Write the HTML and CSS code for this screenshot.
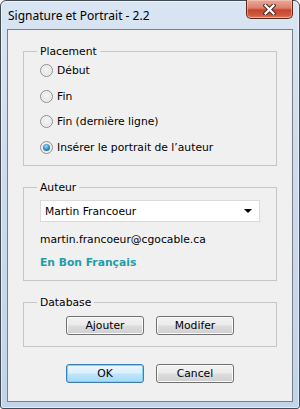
FILE: index.html
```html
<!DOCTYPE html>
<html lang="fr">
<head>
<meta charset="utf-8">
<title>Signature et Portrait - 2.2</title>
<link rel="stylesheet" href="styles.css">
</head>
<body>
<div class="window">
  <div class="titlebar">
    <span class="title">Signature et Portrait - 2.2</span>
    <button class="close" aria-label="Fermer">
      <svg width="13" height="11" viewBox="0 0 13 11">
        <path d="M2.5 1.5 L10.5 9.5 M10.5 1.5 L2.5 9.5" stroke="#4a2a24" stroke-width="4.2" stroke-linecap="square"/>
        <path d="M2.5 1.5 L10.5 9.5 M10.5 1.5 L2.5 9.5" stroke="#ffffff" stroke-width="2.2" stroke-linecap="square"/>
      </svg>
    </button>
  </div>
  <div class="client">
    <fieldset class="group group-placement">
      <legend>Placement</legend>
      <label class="radio"><span class="dot"></span>Début</label>
      <label class="radio"><span class="dot"></span>Fin</label>
      <label class="radio"><span class="dot"></span>Fin (dernière ligne)</label>
      <label class="radio"><span class="dot checked"></span>Insérer le portrait de l’auteur</label>
    </fieldset>
    <fieldset class="group group-auteur">
      <legend>Auteur</legend>
      <div class="combo"><span>Martin Francoeur</span><span class="arrow"></span></div>
      <div class="email">martin.francoeur@cgocable.ca</div>
      <div class="link">En Bon Français</div>
    </fieldset>
    <fieldset class="group group-db">
      <legend>Database</legend>
      <div class="btnrow"><button class="btn">Ajouter</button><button class="btn">Modifer</button></div>
    </fieldset>
    <div class="btnrow dialog-buttons"><button class="btn default">OK</button><button class="btn">Cancel</button></div>
  </div>
</div>
</body>
</html>
```

FILE: styles.css
```css
* { box-sizing: border-box; }
html, body { margin: 0; padding: 0; background: #ffffff; }
body { width: 300px; height: 409px; overflow: hidden; }

.window {
  width: 300px;
  height: 409px;
  border: 1px solid #434a52;
  border-radius: 6px 6px 3px 3px;
  background: linear-gradient(180deg, #d9e5f2 0%, #cddcee 40%, #c0d4ea 100%);
  box-shadow: inset 0 0 0 1px rgba(255,255,255,0.55);
  display: flex;
  flex-direction: column;
}

.titlebar {
  height: 28px;
  display: flex;
  justify-content: space-between;
  align-items: flex-start;
  padding: 0 6px 0 7px;
}
.title {
  font-family: "Noto Sans", sans-serif;
  font-size: 12px;
  line-height: 16px;
  margin-top: 7px;
  color: #000;
}
.close {
  width: 47px;
  height: 19px;
  margin-top: -1px;
  padding: 0;
  border: 1px solid #5b2b22;
  border-top: none;
  border-radius: 0 0 5px 5px;
  background: linear-gradient(180deg, #e9a99a 0%, #dc7f6a 45%, #c8432c 55%, #cf5a3f 85%, #e0866b 100%);
  box-shadow: inset 0 0 0 1px rgba(255,220,210,0.45);
  display: flex;
  align-items: center;
  justify-content: center;
}
.close svg { display: block; }

.client {
  flex: 1;
  margin: 0 6px 6px 6px;
  border: 1px solid #76808b;
  background: #f0f0f0;
  padding: 15px 15px 0 15px;
  font-family: "DejaVu Sans", sans-serif;
  font-size: 10.75px;
  color: #000;
}

.group {
  margin: 0 0 15px 0;
  border: 1px solid #c6c6c6;
  padding: 6px 16px 11px 16px;
  min-width: 0;
}
.group legend {
  padding: 0 3px;
  margin-left: -3px;
  line-height: 13px;
  height: 13px;
}

.group-placement { display: flex; flex-direction: column; gap: 12.7px; }
.radio {
  display: flex;
  align-items: center;
  height: 13px;
  line-height: 13px;
  gap: 4px;
}
.dot {
  width: 13px;
  height: 13px;
  border-radius: 50%;
  border: 1px solid #8d8f91;
  background: radial-gradient(circle at 50% 45%, #f7f7f7 0%, #e6e6e6 55%, #d3d3d3 100%);
  box-shadow: inset 0 0 0 1px #f4f4f4;
  flex: none;
  display: flex;
  align-items: center;
  justify-content: center;
}
.dot.checked::after {
  content: "";
  width: 7px;
  height: 7px;
  border-radius: 50%;
  background: radial-gradient(circle at 45% 35%, #a8dcf6 0%, #3f93cf 45%, #184f86 100%);
}

.group-auteur { padding-top: 6px; }
.combo {
  height: 22px;
  border: 1px solid #dadada;
  background: #ffffff;
  display: flex;
  align-items: center;
  justify-content: space-between;
  padding: 0 4px 0 4px;
}
.arrow {
  width: 0;
  height: 0;
  margin-right: 3px;
  border-left: 4px solid transparent;
  border-right: 4px solid transparent;
  border-top: 4px solid #000;
}
.email { margin-top: 11px; line-height: 13px; }
.link {
  margin-top: 10px;
  line-height: 13px;
  font-weight: bold;
  color: #1e9ea8;
}

.group-db { padding-top: 7px; }
.btnrow {
  display: flex;
  justify-content: center;
  gap: 12px;
}
.btn {
  width: 78px;
  height: 19px;
  padding: 0;
  font: inherit;
  color: #000;
  border: 1px solid #707070;
  border-radius: 3px;
  background: linear-gradient(180deg, #f2f2f2 0%, #ebebeb 48%, #dddddd 52%, #cfcfcf 100%);
  box-shadow: inset 0 0 0 1px #fbfbfb;
  line-height: 17px;
}
.btn.default {
  border-color: #3c7fb1;
  background: linear-gradient(180deg, #eaf6fd 0%, #d9f0fc 48%, #bee6fd 52%, #a7d9f5 100%);
  box-shadow: inset 0 0 0 1px #86d0f3;
}
.dialog-buttons { margin-top: 17px; }
```
